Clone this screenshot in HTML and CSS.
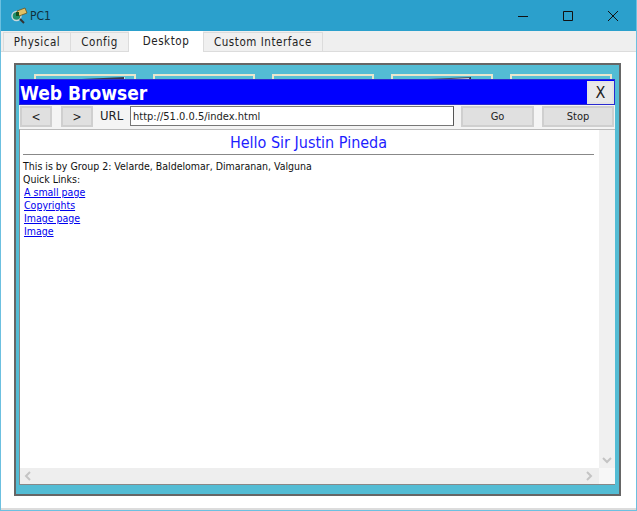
FILE: index.html
```html
<!DOCTYPE html>
<html lang="en">
<head>
<meta charset="utf-8">
<title>PC1</title>
<link rel="stylesheet" href="styles.css">
</head>
<body>
<div class="window">
  <header class="titlebar">
    <svg class="app-icon" width="18" height="18" viewBox="0 0 18 18">
      <circle cx="6.5" cy="9" r="4.5" fill="#1f8f6a" stroke="#c9d8dc" stroke-width="1.4"/>
      <path d="M10 12l4 4" stroke="#333" stroke-width="2"/>
      <path d="M7 4l8-3 2 5-8 3z" fill="#e2c266" stroke="#6b5420" stroke-width=".8"/>
      <path d="M6 5h3v4H6z" fill="#14501f"/>
    </svg>
    <span class="title">PC1</span>
    <div class="controls">
      <svg width="10" height="10" viewBox="0 0 10 10"><path d="M0 5.5h10" stroke="#111" stroke-width="1"/></svg>
      <svg width="10" height="10" viewBox="0 0 10 10"><path d="M.5.5h9v9h-9z" fill="none" stroke="#111" stroke-width="1"/></svg>
      <svg width="10" height="10" viewBox="0 0 10 10"><path d="M0 0l10 10M10 0L0 10" stroke="#111" stroke-width="1"/></svg>
    </div>
  </header>
  <nav class="tabs">
    <span class="tab tab-physical">Physical</span>
    <span class="tab tab-config">Config</span>
    <span class="tab tab-desktop active">Desktop</span>
    <span class="tab tab-custom">Custom Interface</span>
  </nav>
  <main class="pane">
    <div class="desktop">
      <div class="apps">
        <div class="app"><svg class="art" width="98" height="10" viewBox="0 0 98 10"><path d="M24 4l65-3v9H24z" fill="#35394a"/><path d="M88 1h1v9h-1z" fill="#cfd6e0"/></svg></div>
        <div class="app"><svg class="art" width="98" height="10" viewBox="0 0 98 10"><path d="M40 6q12-2 24 0v4H40z" fill="#3a5060"/></svg></div>
        <div class="app"><svg class="art" width="98" height="10" viewBox="0 0 98 10"><path d="M40 6q6-1 12 0v4H40z" fill="#4f9db5"/></svg></div>
        <div class="app"><svg class="art" width="98" height="10" viewBox="0 0 98 10"><path d="M13 4l65-3v9H13z" fill="#4a4f60"/><path d="M40 4l36-2v8H40z" fill="#c9cfdc"/><path d="M77 1h1v9h-1z" fill="#333"/></svg></div>
        <div class="app"><svg class="art" width="98" height="10" viewBox="0 0 98 10"><path d="M38 6q7-2 14 0v4H38z" fill="#4a8aa5"/></svg></div>
      </div>
      <section class="browser">
        <div class="browser-head">
          <h1 class="browser-title">Web Browser</h1>
          <button class="btn close">X</button>
        </div>
        <div class="toolbar">
          <button class="btn nav">&lt;</button>
          <button class="btn nav">&gt;</button>
          <span class="url-label">URL</span>
          <input class="url" value="http://51.0.0.5/index.html">
          <button class="btn action go">Go</button>
          <button class="btn action stop">Stop</button>
        </div>
        <div class="view">
          <div class="page">
            <h2 class="page-title">Hello Sir Justin Pineda</h2>
            <hr class="rule">
            <p class="line">This is by Group 2: Velarde, Baldelomar, Dimaranan, Valguna</p>
            <p class="line">Quick Links:</p>
            <a class="line link" href="#">A small page</a>
            <a class="line link" href="#">Copyrights</a>
            <a class="line link" href="#">Image page</a>
            <a class="line link" href="#">Image</a>
          </div>
          <div class="vbar">
            <svg width="10" height="8" viewBox="0 0 10 8"><path d="M1 2l4 4 4-4" fill="none" stroke="#c4c4c4" stroke-width="2"/></svg>
          </div>
          <div class="hbar">
            <svg width="8" height="10" viewBox="0 0 8 10"><path d="M6 1L2 5l4 4" fill="none" stroke="#c4c4c4" stroke-width="2"/></svg>
            <svg width="8" height="10" viewBox="0 0 8 10"><path d="M2 1l4 4-4 4" fill="none" stroke="#c4c4c4" stroke-width="2"/></svg>
          </div>
          <div class="corner"></div>
        </div>
      </section>
    </div>
  </main>
</div>
</body>
</html>
```
FILE: styles.css
```css
* { box-sizing: border-box; }
html, body { margin: 0; height: 100%; }
body { font-family: "DejaVu Sans Condensed", "DejaVu Sans", sans-serif; font-stretch: condensed; overflow: hidden; }
.window {
  width: 637px; height: 511px; display: flex; flex-direction: column;
  border: 1px solid #6cc0e0; border-top: 0; background: #2ba0cc;
}
.titlebar { height: 31px; flex: none; display: flex; align-items: center; padding: 0 0 0 9px; background: #2ba0cc; color: #10303c; }
.app-icon { flex: none; }
.title { margin-left: 2px; font-size: 12px; }
.controls { margin-left: auto; display: flex; gap: 35px; padding-right: 18px; }
.tabs { height: 20px; flex: none; display: flex; align-items: flex-end; padding-left: 2px; background: #efefef; }
.tab {
  height: 19px; font-size: 11.5px; line-height: 19px; letter-spacing: .55px; text-align: center;
  color: #222; background: #f0f0f0; border: 1px solid #dcdcdc; border-bottom: 0;
}
.tab-physical { width: 68px; }
.tab-config { width: 59px; margin-left: -1px; }
.tab-desktop { width: 74px; }
.tab-custom { width: 120px; }
.tab.active { height: 21px; background: #fff; border-color: #fff; line-height: 19px; margin-bottom: -1px; position: relative; }
.pane { flex: 1; background: #fff; padding: 11px 15px 12px 13px; border-top: 1px solid #dcdcdc; border-bottom: 2px solid #dcdcdc; min-height: 0; }
.desktop { position: relative; height: 100%; background: #53bcd4; border: 2px solid #666; overflow: hidden; }
.apps { display: flex; gap: 17px; padding: 9px 0 0 18px; }
.app { width: 102px; height: 30px; flex: none; border: 2px solid #e8e6cc; background: #58bfd6; position: relative; overflow: hidden; }
.art { display: block; }
.browser { position: absolute; left: 3px; top: 14px; width: 596px; height: 406px; display: flex; flex-direction: column; background: #fff; border-bottom: 1px solid #888; }
.browser-head { height: 26px; flex: none; display: flex; justify-content: space-between; background: #0000ff; border: 1px solid #2a2ad0; padding-right: 0; }
.browser-title { margin: 1px 0 0; color: #fff; font: bold 19px/24px "DejaVu Sans Condensed", "DejaVu Sans", sans-serif; font-stretch: condensed; }
.btn { font-family: inherit; font-stretch: condensed; color: #222; background: #e0e0e0; border: 2px solid #cfcfcf; padding: 0; }
.close { align-self: flex-end; width: 27px; height: 23px; font-size: 16px; line-height: 18px; background: #e9e9e9; border-color: #e4e4e4; }
.toolbar { height: 24px; flex: none; display: flex; align-items: flex-start; padding: 1px 1px 0; background: #f4f4f4; }
.nav { width: 32px; height: 21px; font-size: 12px; margin-right: 9px; line-height: 16px; }
.url-label { font-size: 13px; margin-left: -2px; width: 30px; line-height: 20px; color: #222; }
.url { width: 324px; height: 20px; font: 11px "DejaVu Sans Condensed", "DejaVu Sans", sans-serif; font-stretch: condensed; padding: 0 2px; border: 1px solid #777; border-right-color: #555; background: #fff; color: #222; margin-right: 7px; }
.action { height: 21px; font-size: 11px; line-height: 16px; }
.go { width: 73px; margin-right: 8px; }
.stop { width: 72px; }
.view { flex: 1; min-height: 0; display: grid; grid-template-columns: 1fr 16px; grid-template-rows: 1fr 16px; border-left: 1px solid #888; border-top: 1px solid #bbb; }
.page { padding: 0 5px 0 3px; overflow: hidden; }
.page-title { margin: 0; height: 24px; font: 400 16px/25px "DejaVu Sans Condensed", "DejaVu Sans", sans-serif; font-stretch: condensed; color: #1d1dff; text-align: center; }
.rule { margin: 0 0 5px; border: 0; border-top: 1px solid #888; }
.line { display: block; margin: 0; font-size: 10.5px; line-height: 13px; color: #111; }
.link { color: #0000ee; text-decoration: underline; width: max-content; margin-left: 1px; }
.vbar { background: #f0f0f0; display: flex; align-items: flex-end; justify-content: center; padding-bottom: 4px; }
.hbar { background: #eee; display: flex; align-items: center; justify-content: space-between; padding: 0 6px 0 4px; }
.corner { background: #f7f7f7; }
```
